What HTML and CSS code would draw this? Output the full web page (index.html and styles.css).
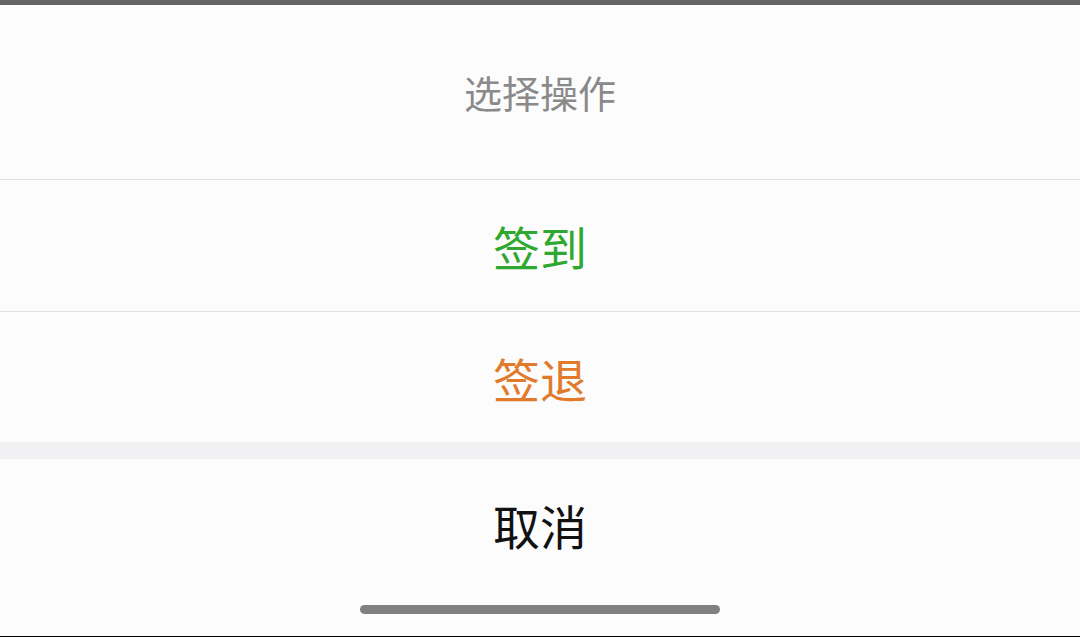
FILE: index.html
```html
<!DOCTYPE html>
<html lang="zh-CN">
<head>
    <meta charset="UTF-8">
    <meta name="viewport" content="width=device-width, initial-scale=1.0">
    <title>选择操作</title>
    <link rel="stylesheet" href="styles.css">
</head>
<body>
    <div class="status-strip"></div>
    <div class="sheet">
        <div class="sheet-title">选择操作</div>
        <button type="button" class="sheet-item item-in">签到</button>
        <button type="button" class="sheet-item item-out">签退</button>
        <div class="sheet-gap"></div>
        <button type="button" class="sheet-item item-cancel">取消</button>
    </div>
    <div class="home-area">
        <div class="home-bar"></div>
    </div>
    <div class="bottom-line"></div>
</body>
</html>
```

FILE: styles.css
```css
/* Basic Reset */
* {
    margin: 0;
    padding: 0;
    box-sizing: border-box;
}

html, body {
    height: 100%;
}

body {
    font-family: "Noto Sans CJK SC", "Noto Sans", sans-serif;
    background-color: #fcfcfd;
    display: flex;
    flex-direction: column;
    overflow: hidden;
}

.status-strip {
    height: 5px;
    background-color: #656565;
}

.sheet {
    display: flex;
    flex-direction: column;
}

.sheet-title {
    height: 175px;
    display: flex;
    align-items: center;
    justify-content: center;
    font-size: 38px;
    color: #8a8a8a;
    border-bottom: 1px solid #e2e2e2;
    padding-bottom: 2px;
}

.sheet-item {
    height: 132px;
    display: flex;
    align-items: center;
    justify-content: center;
    font-family: inherit;
    font-size: 47px;
    background-color: #fcfcfd;
    border: none;
    border-bottom: 1px solid #e2e2e2;
}

.item-in {
    color: #2ea82e;
}

.item-out {
    color: #e27a2c;
    height: 130px;
    border-bottom: none;
}

.sheet-gap {
    height: 17px;
    background-color: #f0f0f2;
}

.item-cancel {
    color: #111;
    height: 130px;
    border-bottom: none;
}

.home-area {
    flex: 1;
    display: flex;
    justify-content: center;
    padding-top: 16px;
}

.home-bar {
    width: 360px;
    height: 9px;
    border-radius: 5px;
    background-color: #808080;
}

.bottom-line {
    height: 1px;
    background-color: #000;
}
```
